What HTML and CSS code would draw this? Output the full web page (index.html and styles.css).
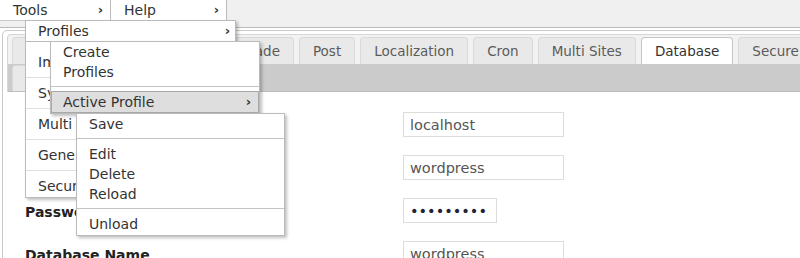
FILE: index.html
```html
<!DOCTYPE html>
<html lang="en">
<head>
    <meta charset="UTF-8">
    <meta name="viewport" content="width=device-width, initial-scale=1.0">
    <title>WP Config Editor</title>
    <link rel="stylesheet" href="styles.css">
</head>
<body>
    <div class="topbar">
        <ul class="menubar">
            <li class="menu-item tools">Tools <span class="arrow">›</span>
                <ul class="dropdown tools-menu">
                    <li class="has-sub profiles-item">Profiles <span class="arrow">›</span>
                        <ul class="dropdown profiles-menu">
                            <li>Create</li>
                            <li>Profiles</li>
                            <li class="sep"></li>
                            <li class="has-sub active-item">Active Profile <span class="arrow">›</span>
                                <ul class="dropdown active-menu">
                                    <li>Save</li>
                                    <li class="sep"></li>
                                    <li>Edit</li>
                                    <li>Delete</li>
                                    <li>Reload</li>
                                    <li class="sep"></li>
                                    <li>Unload</li>
                                </ul>
                            </li>
                        </ul>
                    </li>
                    <li>Import</li>
                    <li>System</li>
                    <li>Multi Sites</li>
                    <li>General</li>
                    <li>Security</li>
                </ul>
            </li>
            <li class="menu-item help">Help <span class="arrow">›</span></li>
        </ul>
    </div>

    <div class="page">
        <div class="tabs">
            <div class="tab-nav">
                <div class="tab-row">
                    <div class="tab">Network</div>
                    <div class="tab">Debugging</div>
                    <div class="tab">Upgrade</div>
                    <div class="tab">Post</div>
                    <div class="tab">Localization</div>
                    <div class="tab">Cron</div>
                    <div class="tab">Multi Sites</div>
                    <div class="tab selected">Database</div>
                    <div class="tab">Secure</div>
                </div>
                <div class="tab-row second">
                    <div class="tab">Cache</div>
                    <div class="tab">Custom</div>
                </div>
            </div>
            <div class="panel">
                <div class="field">
                    <label for="db_host">Database Host</label>
                    <input type="text" id="db_host" value="localhost">
                </div>
                <div class="field">
                    <label for="db_user">Database User</label>
                    <input type="text" id="db_user" value="wordpress">
                </div>
                <div class="field">
                    <label for="db_pass">Password</label>
                    <input type="password" id="db_pass" class="short" value="wordpress">
                </div>
                <div class="field">
                    <label for="db_name">Database Name</label>
                    <input type="text" id="db_name" value="wordpress">
                </div>
            </div>
        </div>
    </div>
</body>
</html>
```

FILE: styles.css
```css
html, body {
    margin: 0;
    overflow: hidden;
}
body {
    font-family: "DejaVu Sans", Verdana, sans-serif;
    font-size: 14px;
    color: #333;
    background-color: #ffffff;
    width: 800px;
    height: 258px;
}

/* menu bar */
.topbar {
    height: 27px;
    background-color: #f0f0f0;
    border-bottom: 1px solid #bbb;
    position: relative;
    z-index: 10;
}
.menubar,
.dropdown {
    list-style: none;
    margin: 0;
    padding: 0;
}
.menubar {
    display: flex;
}
.menu-item {
    position: relative;
    box-sizing: border-box;
    height: 21px;
    line-height: 20px;
    padding-left: 13px;
    background-color: #fff;
    border-right: 1px solid #bbb;
    border-bottom: 1px solid #ccc;
}
.tools {
    width: 111px;
}
.help {
    width: 116px;
}
.arrow {
    position: absolute;
    right: 7px;
    top: 0;
    font-weight: bold;
    font-size: 13px;
}

.dropdown {
    position: absolute;
    z-index: 1;
    box-sizing: border-box;
    background-color: #fff;
    border: 1px solid #bbb;
    box-shadow: 2px 2px 3px rgba(0, 0, 0, 0.25);
}
.dropdown li {
    padding-left: 12px;
    white-space: nowrap;
}
.dropdown .has-sub {
    position: relative;
}
.tools-menu {
    left: 25px;
    top: 20px;
    width: 211px;
}
.tools-menu > li {
    height: 30px;
    line-height: 30px;
    border-bottom: 1px solid #e0e0e0;
}
.tools-menu > li:last-child {
    height: 26px;
    border-bottom: none;
    overflow: hidden;
}
.tools-menu > .profiles-item {
    height: 20px;
    line-height: 20px;
    border-bottom: 1px solid #bbb;
    margin-bottom: 5px;
}
.profiles-item > .arrow {
    right: 5px;
}

.profiles-menu {
    left: 24px;
    top: 20px;
    width: 210px;
}
.profiles-menu > li,
.active-menu > li {
    height: 20px;
    line-height: 20px;
}
.dropdown .sep {
    height: 0;
    padding: 0;
    margin: 4px 0 5px;
    border-top: 1px solid #c4c4c4;
}
.profiles-menu > .sep {
    margin-bottom: 4px;
}
.profiles-menu > .active-item {
    box-sizing: border-box;
    height: 22px;
    background-color: #dedede;
    border: 1px solid #a9a9a9;
    padding-left: 11px;
}
.active-menu {
    left: 24px;
    top: 21px;
    width: 209px;
    padding-bottom: 1px;
}

/* tabs */
.page {
    padding: 2px 0 0 2px;
}
.tabs {
    width: 840px;
    border: 1px solid #c9c9c9;
    border-radius: 5px;
    background-color: #fff;
}
.tab-nav {
    margin: 3px 0 0 4px;
    border: 1px solid #d6d6d6;
    border-bottom: none;
    border-radius: 4px 0 0 0;
    background-color: #f2f2f2;
}
.tab-row {
    display: flex;
    gap: 5px;
    padding: 2px 3px 0 4px;
}
.tab-row.second {
    height: 26px;
    padding-top: 1px;
    background-color: #cbcbcb;
    border-bottom: 1px solid #bdbdbd;
}
.tab {
    box-sizing: border-box;
    height: 27px;
    line-height: 26px;
    padding: 0 13px;
    font-size: 13.5px;
    color: #5b5b5b;
    white-space: nowrap;
    background-color: #e9e9e9;
    border: 1px solid #d9d9d9;
    border-bottom: none;
    border-radius: 4px 4px 0 0;
}
.tab.selected {
    background-color: #fff;
    border-color: #c6c6c6;
    color: #333;
}
.second .tab {
    height: 26px;
}

/* form */
.panel {
    padding: 20px 0 0 22px;
}
.field {
    display: grid;
    grid-template-columns: 378px auto;
    align-items: center;
    margin-bottom: 18px;
}
.field label {
    padding-top: 3px;
    font-weight: bold;
    color: #222;
}
.field input {
    box-sizing: border-box;
    width: 161px;
    height: 25px;
    padding: 0 6px;
    font-family: "DejaVu Sans", Verdana, sans-serif;
    font-size: 14.5px;
    color: #555;
    border: 1px solid #dcdcdc;
    border-radius: 0;
    outline: none;
}
.field input.short {
    width: 94px;
    color: #223;
}
```
